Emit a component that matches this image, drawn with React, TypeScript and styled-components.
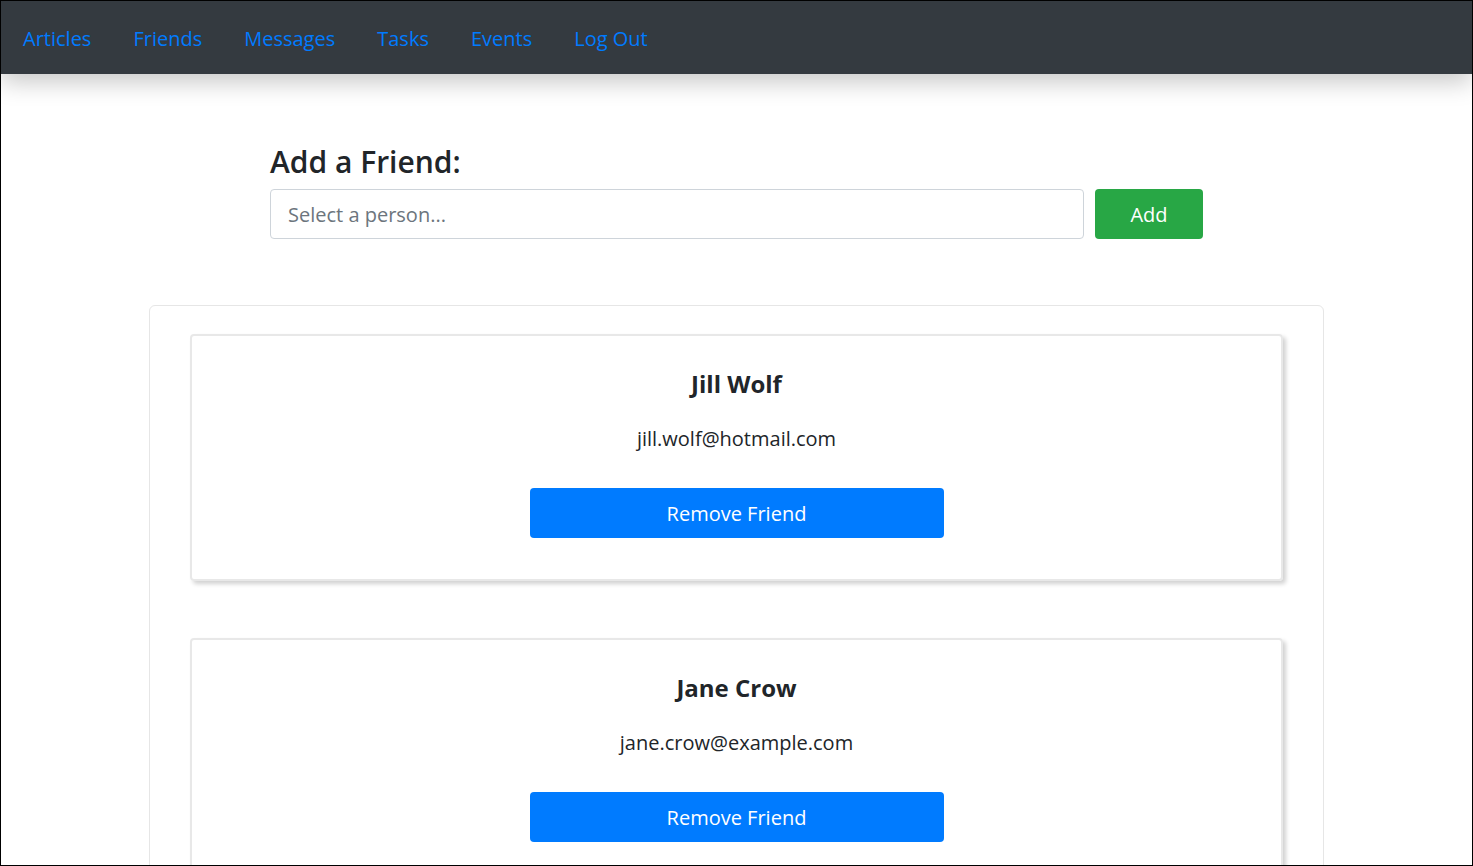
import React from "react";
import styled, { createGlobalStyle } from "styled-components";

const Global = createGlobalStyle`
  html, body { margin: 0; padding: 0; background: #fff; }
  body { font-family: "Open Sans", "Noto Sans", sans-serif; color: #212529; }
  * { box-sizing: border-box; }
`;

const Frame = styled.div`
  width: 1473px;
  height: 866px;
  border: 1px solid #000;
  overflow: hidden;
  background: #fff;
`;

const NavBar = styled.nav`
  height: 73px;
  background: #343a40;
  display: flex;
  align-items: center;
  box-shadow: 0 8px 24px rgba(0, 0, 0, 0.22);
  position: relative;
  z-index: 1;
`;

const NavLink = styled.a`
  color: #007bff;
  font-size: 20px;
  padding: 0 21px;
  text-decoration: none;
  line-height: 1;
  margin-top: 2px;
  &:first-child { padding-left: 22px; }
`;

const Main = styled.main`
  display: flex;
  flex-direction: column;
  align-items: center;
  padding-top: 70px;
`;

const AddSection = styled.section`
  width: 933px;
`;

const Heading = styled.h2`
  margin: 0 0 9px;
  font-size: 30px;
  font-weight: 600;
  line-height: 1.2;
  color: #212529;
`;

const AddRow = styled.div`
  display: flex;
  gap: 11px;
`;

const PersonInput = styled.input`
  flex: 1;
  height: 50px;
  border: 1px solid #ced4da;
  border-radius: 4px;
  padding: 0 17px;
  font-family: inherit;
  font-size: 20px;
  color: #495057;
  &::placeholder { color: #6c757d; }
`;

const AddButton = styled.button`
  width: 108px;
  height: 50px;
  border: none;
  border-radius: 4px;
  background: #28a745;
  color: #fff;
  font-family: inherit;
  font-size: 20px;
`;

const ListBox = styled.div`
  margin-top: 66px;
  width: 1175px;
  border: 1px solid #e6e6e6;
  border-radius: 6px;
  padding: 28px 40px 40px;
  display: flex;
  flex-direction: column;
  gap: 57px;
`;

const Card = styled.div`
  height: 247px;
  border: 2px solid #e8e8e8;
  border-radius: 4px;
  box-shadow: 3px 3px 4px rgba(0, 0, 0, 0.18);
  display: flex;
  flex-direction: column;
  align-items: center;
  padding-top: 33px;
`;

const Name = styled.h3`
  margin: 0;
  font-size: 24px;
  font-weight: 700;
  line-height: 30px;
`;

const Email = styled.p`
  margin: 26px 0 0;
  font-size: 20px;
  line-height: 28px;
`;

const RemoveButton = styled.button`
  margin-top: 35px;
  width: 414px;
  height: 50px;
  border: none;
  border-radius: 4px;
  background: #007bff;
  color: #fff;
  font-family: inherit;
  font-size: 20px;
`;

const links = ["Articles", "Friends", "Messages", "Tasks", "Events", "Log Out"];
const friends = [
  { name: "Jill Wolf", email: "jill.wolf@hotmail.com" },
  { name: "Jane Crow", email: "jane.crow@example.com" },
];

export default function App() {
  return (
    <Frame>
      <Global />
      <NavBar>
        {links.map((l) => (
          <NavLink key={l} href="#">{l}</NavLink>
        ))}
      </NavBar>
      <Main>
        <AddSection>
          <Heading>Add a Friend:</Heading>
          <AddRow>
            <PersonInput placeholder="Select a person..." />
            <AddButton>Add</AddButton>
          </AddRow>
        </AddSection>
        <ListBox>
          {friends.map((f) => (
            <Card key={f.email}>
              <Name>{f.name}</Name>
              <Email>{f.email}</Email>
              <RemoveButton>Remove Friend</RemoveButton>
            </Card>
          ))}
        </ListBox>
      </Main>
    </Frame>
  );
}
